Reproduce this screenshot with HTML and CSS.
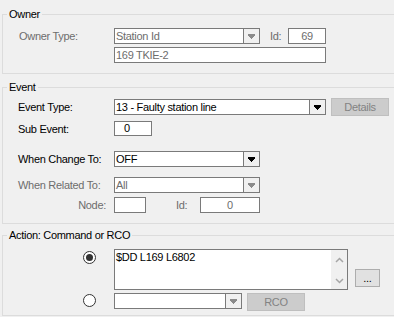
FILE: index.html
```html
<!DOCTYPE html>
<html lang="en">
<head>
    <meta charset="UTF-8">
    <title>Event Action</title>
    <link rel="stylesheet" href="styles.css">
</head>
<body>
    <div class="form">
        <fieldset class="group owner">
            <legend>Owner</legend>
            <div class="row row-owner">
                <label class="lbl off">Owner Type:</label>
                <div class="combo off w146">
                    <span class="val">Station Id</span>
                    <span class="drop"><svg width="7" height="5" viewBox="0 0 7 5"><path d="M0 0h7v2h-1v1h-1v1h-1v1h-1v-1h-1v-1h-1v-1h-1z"/></svg></span>
                </div>
                <label class="lbl-id off">Id:</label>
                <div class="box off w38 mid">69</div>
            </div>
            <div class="row row-name">
                <div class="box off w212 indent">169 TKIE-2</div>
            </div>
        </fieldset>

        <fieldset class="group event">
            <legend>Event</legend>
            <div class="row row-type">
                <label class="lbl">Event Type:</label>
                <div class="combo w212">
                    <span class="val">13 - Faulty station line</span>
                    <span class="drop"><svg width="7" height="5" viewBox="0 0 7 5"><path d="M0 0h7v2h-1v1h-1v1h-1v1h-1v-1h-1v-1h-1v-1h-1z"/></svg></span>
                </div>
                <button type="button" class="btn btn-off btn-details">Details</button>
            </div>
            <div class="row row-sub">
                <label class="lbl">Sub Event:</label>
                <div class="box w38 sub">0</div>
            </div>
            <div class="row row-change">
                <label class="lbl">When Change To:</label>
                <div class="combo w146">
                    <span class="val">OFF</span>
                    <span class="drop"><svg width="7" height="5" viewBox="0 0 7 5"><path d="M0 0h7v2h-1v1h-1v1h-1v1h-1v-1h-1v-1h-1v-1h-1z"/></svg></span>
                </div>
            </div>
            <div class="row row-related">
                <label class="lbl off">When Related To:</label>
                <div class="combo off w146">
                    <span class="val">All</span>
                    <span class="drop"><svg width="7" height="5" viewBox="0 0 7 5"><path d="M0 0h7v2h-1v1h-1v1h-1v1h-1v-1h-1v-1h-1v-1h-1z"/></svg></span>
                </div>
            </div>
            <div class="row row-node">
                <label class="lbl lbl-right off">Node:</label>
                <div class="box off w32"></div>
                <label class="lbl-node-id off">Id:</label>
                <div class="box off w60 mid">0</div>
            </div>
        </fieldset>

        <fieldset class="group action">
            <legend>Action: Command or RCO</legend>
            <div class="row row-cmd">
                <span class="radio checked"></span>
                <div class="memo">
                    <span class="memo-text">$DD L169 L6802</span>
                    <span class="memo-scroll">
                        <svg width="9" height="6" viewBox="0 0 9 6"><path d="M1 5l3.5-3.5L8 5" fill="none" stroke="#a6a6a6" stroke-width="1.5"/></svg>
                        <svg width="9" height="6" viewBox="0 0 9 6"><path d="M1 1l3.5 3.5L8 1" fill="none" stroke="#a6a6a6" stroke-width="1.5"/></svg>
                    </span>
                </div>
                <button type="button" class="btn btn-more">...</button>
            </div>
            <div class="row row-rco">
                <span class="radio"></span>
                <div class="combo off w128">
                    <span class="val"></span>
                    <span class="drop"><svg width="7" height="5" viewBox="0 0 7 5"><path d="M0 0h7v2h-1v1h-1v1h-1v1h-1v-1h-1v-1h-1v-1h-1z"/></svg></span>
                </div>
                <button type="button" class="btn btn-off btn-rco">RCO</button>
            </div>
        </fieldset>
    </div>
</body>
</html>
```

FILE: styles.css
```css
body {
    margin: 0;
    background-color: #f0f0f0;
    font-family: 'Liberation Sans', Arial, sans-serif;
    font-size: 11px;
    letter-spacing: -0.3px;
    color: #000;
    overflow: hidden;
}

.form {
    width: 394px;
    height: 317px;
    overflow: hidden;
}

/* group boxes */
.group {
    width: 430px;
    margin: 0 0 0 2px;
    padding: 0;
    border: 1px solid #dcdcdc;
    box-sizing: border-box;
}

.group legend {
    margin-left: 4px;
    padding: 0 2px;
    line-height: 13px;
    height: 13px;
}

.owner {
    margin-top: 8px;
    padding-bottom: 10px;
}

.event {
    margin-top: 7px;
    padding-bottom: 10px;
}

.action {
    margin-top: 5px;
    padding-bottom: 4px;
}

/* rows */
.row {
    display: flex;
    align-items: center;
}

.owner .row,
.event .row {
    padding-left: 16px;
}

.event .row {
    padding-left: 15px;
}

.row-owner { margin-top: 7px; height: 16px; }
.row-name { margin-top: 3px; height: 16px; padding-left: 0 !important; }
.row-type { margin-top: 4px; height: 18px; }
.row-sub { margin-top: 5px; height: 15px; }
.row-change { margin-top: 15px; height: 16px; }
.row-related { margin-top: 10px; height: 16px; }
.row-node { margin-top: 4px; height: 16px; }
.row-cmd { margin-top: 7px; align-items: flex-start; }
.row-rco { margin-top: 3px; height: 18px; align-items: flex-start; }

.indent {
    margin-left: 111px;
}

.lbl {
    width: 95px;
    white-space: nowrap;
}

.event .lbl {
    width: 96px;
}

.lbl-right {
    text-align: right;
    padding-right: 8px;
    box-sizing: border-box;
}

.lbl-id {
    width: 18px;
    margin-left: 10px;
}

.lbl-node-id {
    width: 24px;
    margin-left: 30px;
}

.off {
    color: #6d6d6d;
}

/* text boxes and combos */
.box,
.combo {
    height: 16px;
    box-sizing: border-box;
    border: 1px solid #7a7a7a;
    background-color: #fff;
    line-height: 14px;
    white-space: nowrap;
    overflow: hidden;
}

.box {
    padding-left: 1px;
}

.box.sub {
    height: 15px;
    line-height: 13px;
    padding-left: 9px;
}

.mid {
    text-align: center;
    padding-left: 0;
}

.w32 { width: 32px; }
.w38 { width: 38px; }
.w60 { width: 60px; }
.w128 { width: 128px; }
.w146 { width: 146px; }
.w212 { width: 212px; }

.combo {
    display: flex;
}

.combo .val {
    flex: 1;
    padding-left: 1px;
}

.combo .drop {
    width: 15px;
    border-left: 1px solid #7a7a7a;
    background-color: #f0f0f0;
    display: flex;
    align-items: center;
    justify-content: center;
}

.combo .drop svg {
    fill: #000;
    shape-rendering: crispEdges;
}

.combo.off .drop svg {
    fill: #8a8a8a;
}

/* buttons */
.btn {
    height: 18px;
    box-sizing: border-box;
    border: 1px solid #adadad;
    background-color: #e1e1e1;
    font-family: inherit;
    font-size: 11px;
    letter-spacing: -0.3px;
    color: #000;
    padding: 0;
    line-height: 16px;
    text-align: center;
}

.btn-off {
    border-color: #bfbfbf;
    background-color: #cccccc;
    color: #838383;
}

.btn-details {
    width: 58px;
    margin-left: 5px;
}

.btn-rco {
    width: 58px;
    margin-left: 5px;
}

.btn-more {
    width: 25px;
    margin-left: 7px;
    margin-top: 20px;
}

/* radio buttons */
.radio {
    width: 13px;
    height: 13px;
    box-sizing: border-box;
    border: 1px solid #333;
    border-radius: 50%;
    background-color: #fff;
    margin-left: 80px;
    margin-right: 18px;
    display: flex;
    align-items: center;
    justify-content: center;
}

.row-cmd .radio {
    margin-top: 2px;
}

.row-rco .radio {
    margin-top: 1px;
}

.radio.checked::after {
    content: "";
    width: 7px;
    height: 7px;
    border-radius: 50%;
    background-color: #333;
}

/* command memo */
.memo {
    width: 234px;
    height: 41px;
    box-sizing: border-box;
    border: 1px solid #7a7a7a;
    background-color: #fff;
    display: flex;
}

.memo-text {
    flex: 1;
    padding-left: 1px;
    line-height: 14px;
}

.memo-scroll {
    width: 16px;
    background-color: #f0f0f0;
    display: flex;
    flex-direction: column;
    align-items: center;
    justify-content: space-between;
    padding: 7px 0 5px;
    box-sizing: border-box;
}
```
